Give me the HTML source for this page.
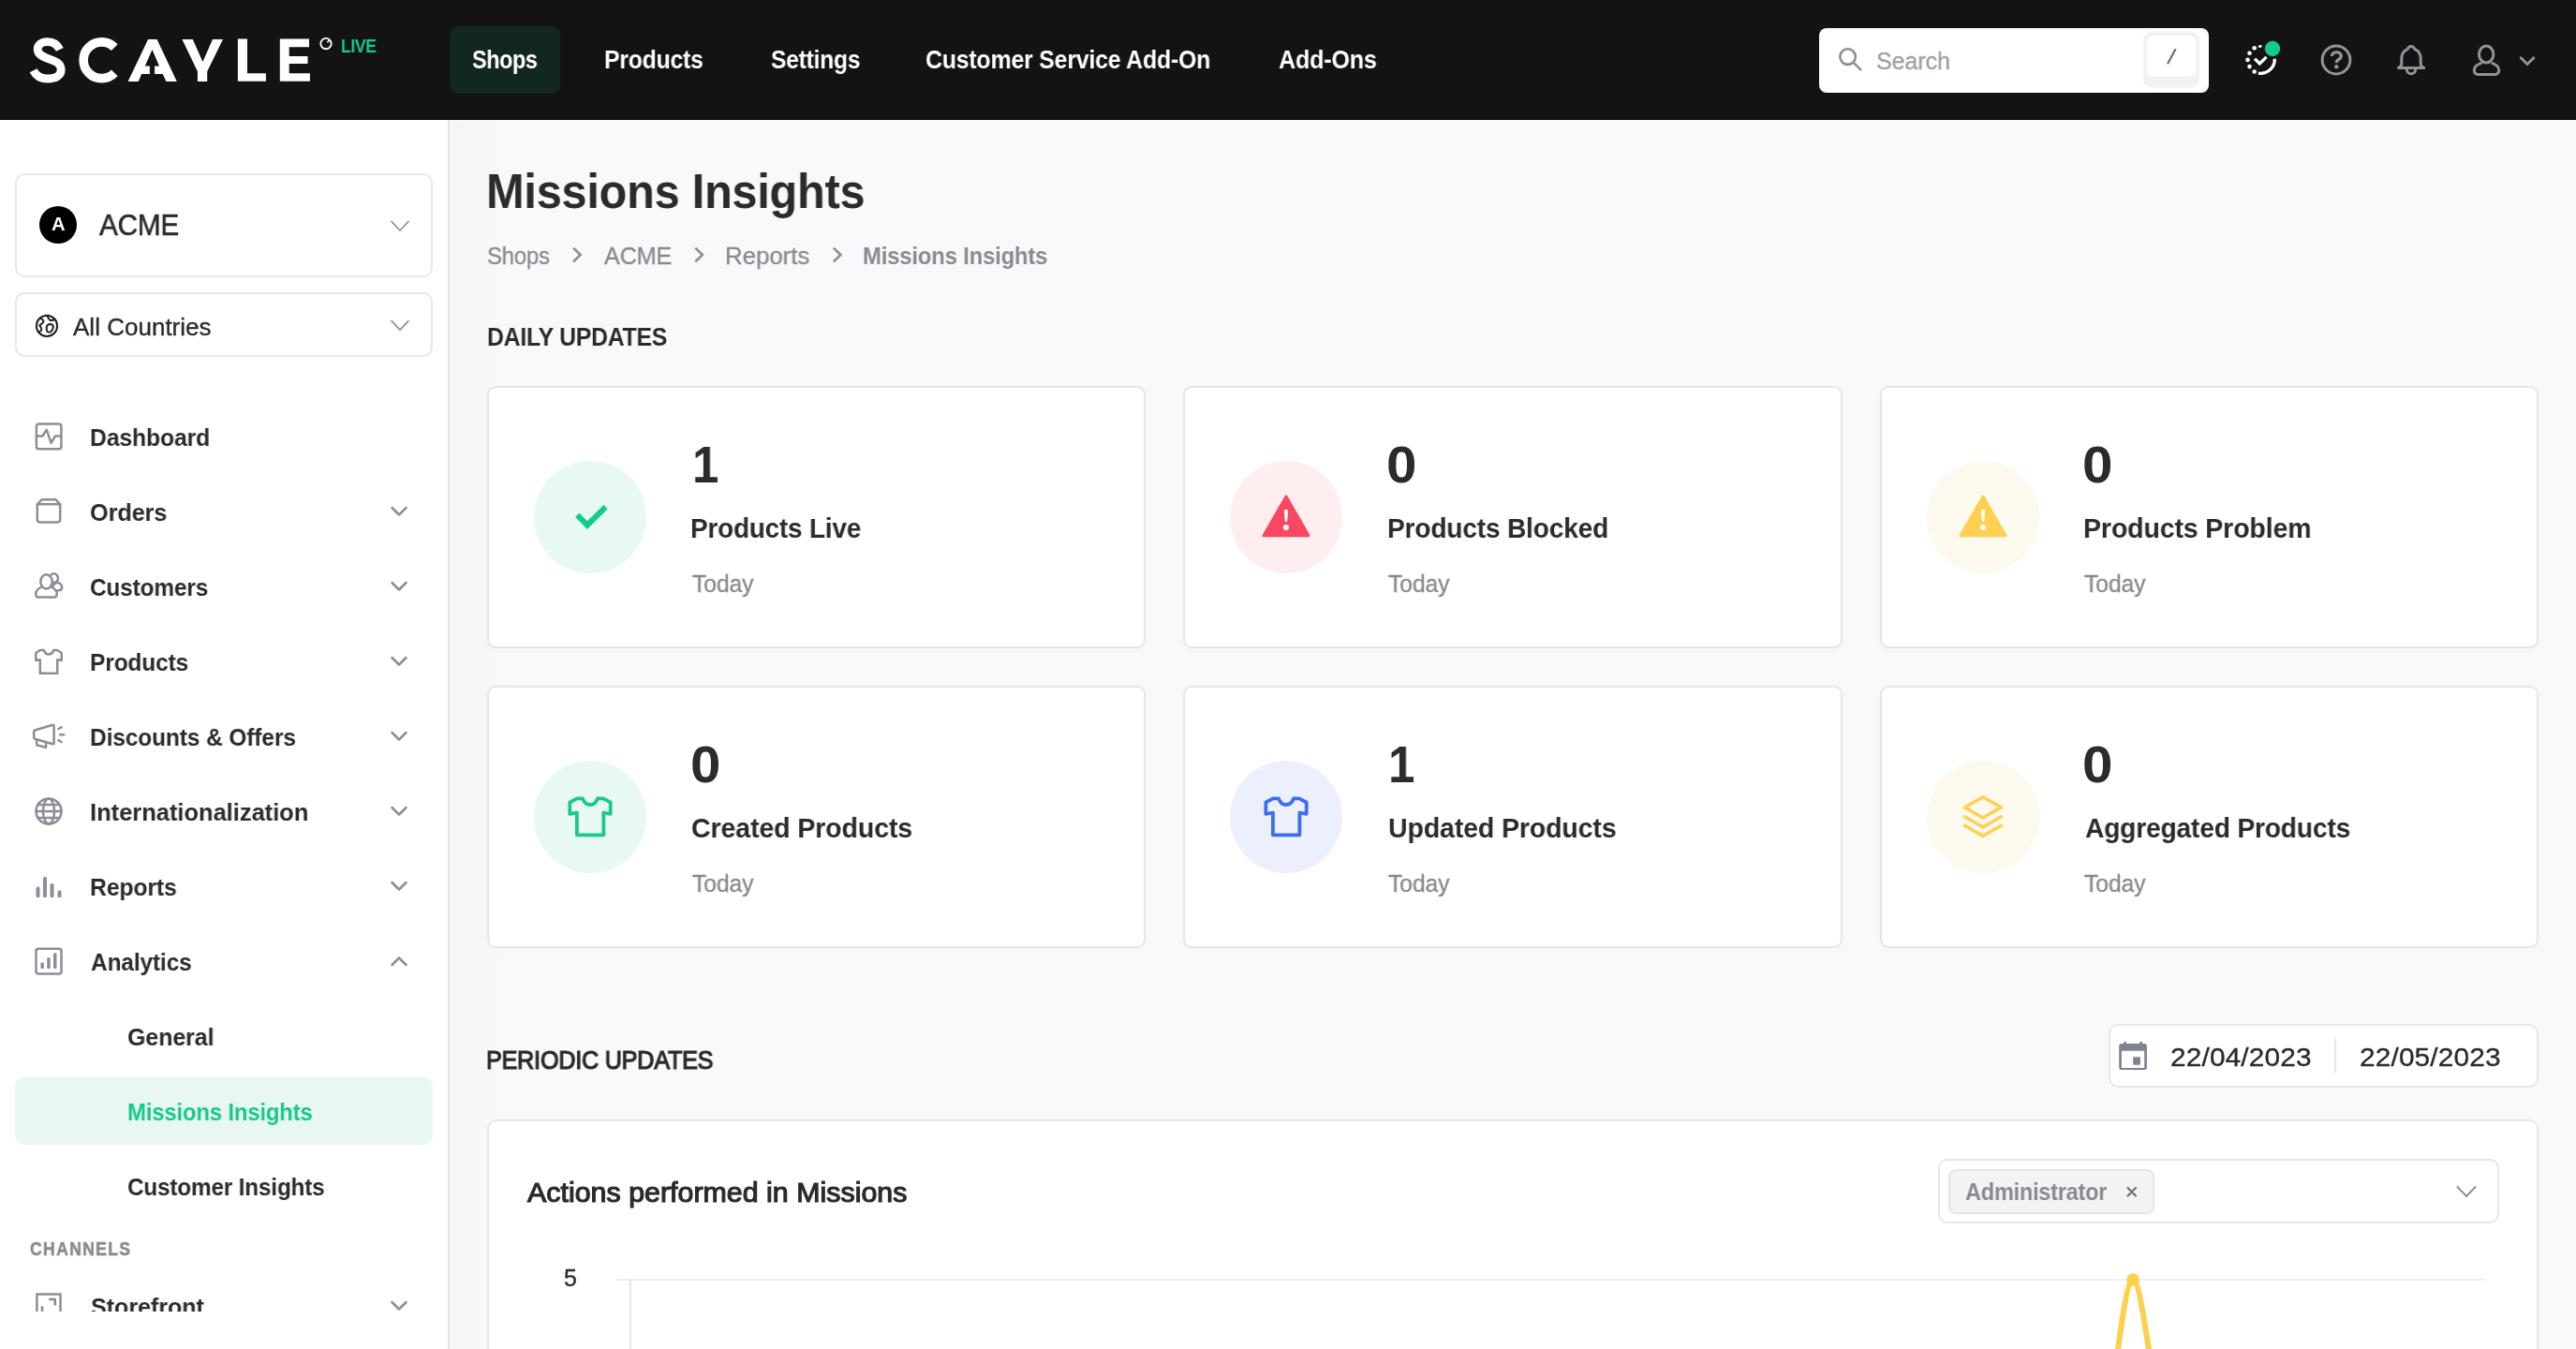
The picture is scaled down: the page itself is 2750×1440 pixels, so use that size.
<!DOCTYPE html>
<html>
<head>
<meta charset="utf-8">
<style>
html,body{margin:0;padding:0;width:2750px;height:1440px;overflow:hidden;background:#f8f9fb;font-family:"Liberation Sans",sans-serif;}
.t{position:absolute;line-height:1;white-space:nowrap;font-family:"Liberation Sans",sans-serif;will-change:transform;}
.abs{position:absolute;}
#header{position:absolute;left:0;top:0;width:2750px;height:127px;background:#131313;border-bottom:1px solid #000;}
#sidebar{position:absolute;left:0;top:128px;width:478px;height:1312px;background:#fff;border-right:2px solid #e6e7ea;overflow:hidden;}
#main{position:absolute;left:480px;top:129px;width:2270px;height:1311px;background:#f8f9fb;}
#shade{position:absolute;left:480px;top:129px;width:60px;height:1311px;background:linear-gradient(to right,#f4f5f7,rgba(248,249,251,0));}
.box{position:absolute;box-sizing:border-box;border:2px solid #e5e7eb;border-radius:10px;background:#fff;}
.card{position:absolute;box-sizing:border-box;width:703.33px;height:280px;border:2px solid #e4e6e9;border-radius:9px;background:#fff;box-shadow:0 2px 8px rgba(20,30,50,0.018);}
.ic{position:absolute;width:120px;height:120px;}
.ic svg{display:block;}
svg.i{position:absolute;left:0;top:0;overflow:visible;}
</style>
</head>
<body>
<div id="header"></div>
<div id="sidebar"></div>
<div id="main"></div>
<div id="shade"></div>

<!-- header graphics -->
<svg class="i" width="2750" height="128" viewBox="0 0 2750 128">
  <!-- logo -->
  <g fill="#fff">
    <path d="M136.6,86.9 L158.1,41.9 L167.6,41.9 L188.8,86.9 L177.4,86.9 L173.7,79 L165.1,79 L165.1,70.6 L170,70.6 L162.5,52.9 L154.8,70.6 L159.9,70.6 L159.9,79 L151.1,79 L147.8,86.9 Z"/>
    <path d="M194.4,41.9 L205.8,41.9 L216.4,66 L227,41.9 L238,41.9 L221.2,76.2 L221.2,86.9 L210.9,86.9 L210.9,76.2 Z"/>
    <path d="M253.9,41.6 H264 V78.2 H283.9 V86.8 H253.9 Z"/>
    <path d="M298.8,41.6 H330 V50.3 H308.7 V60 H328.5 V68 H308.7 V78.2 H330.9 V86.8 H298.8 Z"/>
  </g>
  <g fill="none" stroke="#fff">
    <path d="M63.8,52.8 C61,47 56,44.6 50.5,44.6 C44,44.6 40.2,48.2 40.2,52.6 C40.2,58.2 45.5,60.6 52,62.8 C59.5,65.3 65.2,67.6 65.2,74.6 C65.2,80.6 59.5,84 51,84 C43.5,84 38.2,80.5 35.6,75.2" stroke-width="8.8"/>
    <path d="M122.3,50.6 A19.4,19.4 0 1 0 122.3,77.9" stroke-width="9.6"/>
    <circle cx="348" cy="46.6" r="5.7" stroke-width="1.9"/>
    <path d="M349.3,45.2 L352.2,42.6" stroke-width="1.6"/>
  </g>
  <!-- active nav -->
  <rect x="480" y="28" width="118" height="72" rx="9" fill="#12271f"/>
  <!-- search -->
  <rect x="1942" y="30" width="416" height="69" rx="8" fill="#fff"/>
  <rect x="2288" y="34" width="60" height="59.5" rx="9" fill="#f1f2f4"/>
  <rect x="2292" y="38" width="52" height="43.5" rx="6" fill="#fff"/>
  <path d="M2322.6,52.2 L2314,68.3" stroke="#6e737a" stroke-width="2.3" fill="none"/>
  <g fill="none" stroke="#8a8f97" stroke-width="2.6" stroke-linecap="round">
    <circle cx="1972.6" cy="60.6" r="8.3"/>
    <path d="M1978.8,66.8 L1986.3,74.3"/>
  </g>
  <!-- mission icon -->
  <g fill="#fff">
    <circle cx="2406.7" cy="76.5" r="2.3"/><circle cx="2401.5" cy="71.1" r="2.3"/><circle cx="2399.5" cy="63.9" r="2.3"/>
    <circle cx="2401.5" cy="56.7" r="2.3"/><circle cx="2406.7" cy="51.3" r="2.3"/>
    <path d="M2411.1,48.3 L2414.9,48.2 L2414.1,50.8 L2410.9,50.8 Z"/>
  </g>
  <g fill="none" stroke="#fff" stroke-width="3.3" stroke-linecap="butt" stroke-linejoin="miter">
    <path d="M2428.3,62.8 A14.9,14.9 0 0 1 2410.9,78.1"/>
    <path d="M2407,62.6 L2412.3,68 L2419.5,60.8"/>
  </g>
  <circle cx="2426" cy="51.9" r="8.15" fill="#12cc8d"/>
  <g fill="none" stroke="#909399" stroke-width="3" stroke-linecap="round" stroke-linejoin="round">
    <circle cx="2494" cy="64" r="14.9"/>
  </g>
  <path d="M2489.4,59.9 C2489.4,57.2 2491.6,55.6 2494.3,55.6 C2497.1,55.6 2499.2,57.4 2499.2,59.9 C2499.2,62.4 2496.8,63.2 2495.2,64.6 C2494.5,65.2 2494.4,66 2494.4,67.3" fill="none" stroke="#909399" stroke-width="3.4" stroke-linecap="butt"/>
  <circle cx="2494.2" cy="71.3" r="2.2" fill="#909399"/>
  <g fill="none" stroke="#909399" stroke-width="3" stroke-linecap="round" stroke-linejoin="round">
    <path d="M2574,49.6 C2572,49.6 2570.8,51 2570,52.7 C2566.2,54.3 2563.8,57.8 2563.8,62.2 V68.4 C2563.8,70 2562.3,71.4 2560.4,72.4 H2587.6 C2585.7,71.4 2584.2,70 2584.2,68.4 V62.2 C2584.2,57.8 2581.8,54.3 2578,52.7 C2577.2,51 2576,49.6 2574,49.6 Z"/>
    <path d="M2569.4,74.2 A4.6,4.6 0 0 0 2578.6,74.2"/>
    <ellipse cx="2654.2" cy="58" rx="7.7" ry="8.9"/>
    <path d="M2648.4,67.6 C2644,68.8 2641.3,72 2641.3,75.3 C2641.3,78 2643.5,79.6 2646.5,79.6 H2662.5 C2665.5,79.6 2667.7,78 2667.7,75.3 C2667.7,72 2665,68.8 2660.6,67.6"/>
  </g>
  <path d="M2690.4,61 L2698,68.6 L2705.6,61" fill="none" stroke="#909399" stroke-width="2.8" stroke-linecap="butt" stroke-linejoin="miter"/>
</svg>
<div class="t" style="left:504.0px;top:51.1px;font-size:27px;font-weight:bold;color:#ffffff;letter-spacing:-0.50px;transform:scaleX(0.8682);transform-origin:0 0;">Shops</div><div class="t" style="left:645.1px;top:51.1px;font-size:27px;font-weight:bold;color:#ffffff;letter-spacing:-0.25px;transform:scaleX(0.9181);transform-origin:0 0;">Products</div><div class="t" style="left:822.5px;top:51.1px;font-size:27px;font-weight:bold;color:#ffffff;letter-spacing:-0.24px;transform:scaleX(0.9115);transform-origin:0 0;">Settings</div><div class="t" style="left:988.1px;top:51.1px;font-size:27px;font-weight:bold;color:#ffffff;letter-spacing:-0.22px;transform:scaleX(0.9215);transform-origin:0 0;">Customer Service Add-On</div><div class="t" style="left:1365.0px;top:51.1px;font-size:27px;font-weight:bold;color:#ffffff;letter-spacing:-0.23px;transform:scaleX(0.9321);transform-origin:0 0;">Add-Ons</div><div class="t" style="left:2003.0px;top:52.0px;font-size:26px;font-weight:normal;color:#9a9fa6;letter-spacing:-0.10px;transform:scaleX(0.9635);transform-origin:0 0;-webkit-text-stroke:0.35px #9a9fa6;">Search</div><div class="t" style="left:364.0px;top:38.5px;font-size:20.8px;font-weight:bold;color:#17c98b;letter-spacing:-0.44px;transform:scaleX(0.8469);transform-origin:0 0;">LIVE</div>

<!-- sidebar graphics -->
<div class="box" style="left:16px;top:184.5px;width:446px;height:111.5px;"></div>
<div class="box" style="left:16px;top:312px;width:446px;height:69px;"></div>
<div class="abs" style="left:16px;top:1150px;width:446px;height:72px;border-radius:10px;background:#e8f8f1;"></div>
<svg class="i" width="480" height="1440" viewBox="0 0 480 1440">
  <circle cx="62" cy="240" r="20" fill="#000"/>
  <g fill="none" stroke="#8e9196" stroke-width="1.8" stroke-linecap="round" stroke-linejoin="round">
    <path d="M418,236.5 L427,246 L436,236.5"/>
    <path d="M418,342.7 L427,352.2 L436,342.7"/>
  </g>
  <g fill="none" stroke="#1d1e20" stroke-width="2" stroke-linecap="round" stroke-linejoin="round">
    <circle cx="50" cy="347.9" r="11.1"/>
    <path d="M43,339.6 C45,340.5 46.4,341.5 46.4,343.2 C46.4,345 44,345.8 42.2,347.2 C43.3,348.8 44.6,350 44.3,352 C44,353.4 42.8,354 41.7,354.4"/>
    <path d="M50.5,337 C51,339 51.8,340.5 53.4,341.7 C55,342.3 56.6,341.7 58.4,341"/>
    <path d="M49.7,348.8 C50.5,346.8 52,346 53.6,346 C55.2,346 56.4,346.8 57,348.6 C56.6,350.8 55.8,352.6 54.6,353.8 C53.6,354.6 51.5,354.8 50.5,354 C49.5,352.5 49.6,350.5 49.7,348.8 Z"/>
  </g>
  <g fill="none" stroke="#8a8f97" stroke-width="2.5" stroke-linecap="round" stroke-linejoin="round">
    <!-- dashboard -->
    <rect x="38.9" y="452.6" width="26.5" height="26.7" rx="2.6"/>
    <path d="M38.9,465.5 H45.4 L49.8,458.8 L54.6,472.8 L58.9,465.5 H65.4"/>
    <!-- orders -->
    <path d="M39.8,538.3 L44.8,533.2 H59.2 L64.2,538.3 Z"/>
    <path d="M39.8,538.3 V554.6 Q39.8,557.4 42.6,557.4 H61.4 Q64.2,557.4 64.2,554.6 V538.3"/>
    <!-- customers -->
    <ellipse cx="49.5" cy="620.9" rx="6.2" ry="7.6"/>
    <path d="M54.6,613.6 C55.3,612.6 56.3,612.2 57.4,612.2 C60,612.2 61.9,614.5 61.9,617.3 C61.9,619.8 60.4,621.7 57.8,621.8 H56.4"/>
    <path d="M56.2,626.8 C57.2,624 58.6,622.3 60.8,622.1 C63.8,621.9 66.1,624.3 66.1,627 C66.1,629 64.4,630.3 62.3,630.3 H59.3"/>
    <path d="M43.5,627 C40.2,628.8 38.1,631.4 38.1,634 C38.1,636.3 39.6,637.6 42,637.6 H56.8 C59.3,637.6 60.8,636.3 60.8,634 C60.8,631.4 58.8,628.8 55.5,627"/>
    <!-- products tshirt -->
    <path d="M38.3,697 L43,694 H46.8 C47.8,697 49.8,698.5 52,698.5 C54.2,698.5 56.2,697 57.2,694 H61 L65.7,697 V705 L61.2,704.2 V718.7 H42.8 V704.2 L38.3,705 Z"/>
    <!-- megaphone -->
    <path d="M36.2,781 C36.2,780.3 36.6,779.8 37.3,779.5 L56.4,773.8 C57.1,773.6 57.6,774 57.6,774.7 V793.3 C57.6,794 57.1,794.4 56.4,794.2 L37.3,788.7 C36.6,788.5 36.2,788 36.2,787.3 Z"/>
    <path d="M39.2,789.3 V795.2 L49,797.9 V792.3"/>
    <path d="M62.3,778 L65.6,776.4 M64.1,784.3 H68.2 M62.3,790.2 L65.6,792"/>
    <!-- globe -->
    <circle cx="52" cy="866" r="13.5"/>
    <ellipse cx="52" cy="866" rx="6" ry="13.5"/>
    <path d="M38.5,866 H65.5 M40.5,859 H63.5 M40.5,873 H63.5"/>
    <!-- analytics -->
    <rect x="38.5" y="1012.7" width="27" height="26.8" rx="2.5"/>
  </g>
  <g fill="#8a8f97">
    <rect x="38.5" y="946.5" width="4" height="11.5" rx="1.5"/>
    <rect x="46" y="936" width="4" height="22" rx="1.5"/>
    <rect x="53.5" y="943" width="4" height="15" rx="1.5"/>
    <rect x="61.5" y="950.5" width="4" height="7.5" rx="1.5"/>
    <rect x="43.4" y="1027.4" width="3.5" height="6.5" rx="1"/>
    <rect x="50.2" y="1022.3" width="3.5" height="11.6" rx="1"/>
    <rect x="57" y="1017.3" width="3.5" height="16.6" rx="1"/>
  </g>
  <g fill="none" stroke="#8a8f97" stroke-width="2.5" stroke-linecap="round" stroke-linejoin="round">
    <path d="M418.5,542 L426,549.5 L433.5,542"/>
    <path d="M418.5,622 L426,629.5 L433.5,622"/>
    <path d="M418.5,702 L426,709.5 L433.5,702"/>
    <path d="M418.5,782 L426,789.5 L433.5,782"/>
    <path d="M418.5,862 L426,869.5 L433.5,862"/>
    <path d="M418.5,942 L426,949.5 L433.5,942"/>
    <path d="M418.5,1030 L426,1022.5 L433.5,1030"/>
    <path d="M418.5,1390 L426,1397.5 L433.5,1390"/>
  </g>
  <g fill="none" stroke="#8a8f97" stroke-width="2.5">
    <path d="M39.4,1400 V1381.4 H64.5 V1400"/>
    <path d="M52.2,1387 H58.8 V1393.6 M45,1394.3 V1400"/>
  </g>
</svg>
<div class="t" style="left:55px;top:228.8px;font-size:20.3px;font-weight:bold;color:#fff;">A</div>
<div class="t" style="left:106.0px;top:225.4px;font-size:31.2px;font-weight:normal;color:#2b2b2b;letter-spacing:-0.25px;transform:scaleX(0.9541);transform-origin:0 0;-webkit-text-stroke:0.6px #2b2b2b;">ACME</div><div class="t" style="left:78.4px;top:336.0px;font-size:26px;font-weight:normal;color:#2b2b2b;letter-spacing:0.00px;transform:scaleX(1.0012);transform-origin:0 0;-webkit-text-stroke:0.35px #2b2b2b;">All Countries</div><div class="t" style="left:95.5px;top:454.0px;font-size:26px;font-weight:bold;color:#2b2b2b;letter-spacing:-0.14px;transform:scaleX(0.9521);transform-origin:0 0;">Dashboard</div><div class="t" style="left:95.5px;top:534.0px;font-size:26px;font-weight:bold;color:#2b2b2b;letter-spacing:-0.09px;transform:scaleX(0.9715);transform-origin:0 0;">Orders</div><div class="t" style="left:95.6px;top:614.0px;font-size:26px;font-weight:bold;color:#2b2b2b;letter-spacing:-0.18px;transform:scaleX(0.9392);transform-origin:0 0;">Customers</div><div class="t" style="left:95.6px;top:693.5px;font-size:26px;font-weight:bold;color:#2b2b2b;letter-spacing:-0.16px;transform:scaleX(0.9437);transform-origin:0 0;">Products</div><div class="t" style="left:95.6px;top:774.0px;font-size:26px;font-weight:bold;color:#2b2b2b;letter-spacing:-0.14px;transform:scaleX(0.9433);transform-origin:0 0;">Discounts &amp; Offers</div><div class="t" style="left:95.5px;top:854.0px;font-size:26px;font-weight:bold;color:#2b2b2b;letter-spacing:-0.04px;transform:scaleX(0.9821);transform-origin:0 0;">Internationalization</div><div class="t" style="left:95.5px;top:934.0px;font-size:26px;font-weight:bold;color:#2b2b2b;letter-spacing:-0.14px;transform:scaleX(0.9517);transform-origin:0 0;">Reports</div><div class="t" style="left:96.5px;top:1014.0px;font-size:26px;font-weight:bold;color:#2b2b2b;letter-spacing:-0.15px;transform:scaleX(0.9410);transform-origin:0 0;">Analytics</div><div class="t" style="left:135.6px;top:1094.3px;font-size:26px;font-weight:bold;color:#2b2b2b;letter-spacing:-0.11px;transform:scaleX(0.9621);transform-origin:0 0;">General</div><div class="t" style="left:135.7px;top:1174.0px;font-size:26px;font-weight:bold;color:#17c98b;letter-spacing:-0.20px;transform:scaleX(0.9199);transform-origin:0 0;">Missions Insights</div><div class="t" style="left:135.7px;top:1254.3px;font-size:26px;font-weight:bold;color:#2b2b2b;letter-spacing:-0.17px;transform:scaleX(0.9344);transform-origin:0 0;">Customer Insights</div><div class="t" style="left:32.4px;top:1322.9px;font-size:20.5px;font-weight:bold;color:#878b91;letter-spacing:1.52px;transform:scaleX(0.8600);transform-origin:0 0;-webkit-text-stroke:0.5px #878b91;">CHANNELS</div><div class="t" style="left:96.6px;top:1382.0px;font-size:26px;font-weight:bold;color:#2b2b2b;letter-spacing:-0.08px;transform:scaleX(0.9668);transform-origin:0 0;">Storefront</div>
<div class="abs" style="left:0;top:1400px;width:478px;height:40px;background:#fff;"></div>

<!-- main -->
<div class="card" style="left:520px;top:412px"></div><div class="ic ic-live" style="left:570px;top:492px"><svg width='120' height='120' viewBox='0 0 120 120'><circle cx='60' cy='60' r='60' fill='#e7f9f2'/><polygon points='44,59.8 48.5,55.8 56.9,64.3 74.5,46.9 78.5,51.4 56.9,72.9' fill='#12cc8d'/></svg></div><div class="t" style="left:738.5px;top:468.8px;font-size:55px;font-weight:bold;color:#2b2b2b;letter-spacing:0.00px;transform:scaleX(0.9259);transform-origin:0 0;">1</div><div class="t" style="left:737.3px;top:548.9px;font-size:30px;font-weight:bold;color:#2b2b2b;letter-spacing:-0.21px;transform:scaleX(0.9305);transform-origin:0 0;">Products Live</div><div class="t" style="left:738.5px;top:610.0px;font-size:26px;font-weight:normal;color:#878b91;letter-spacing:-0.15px;transform:scaleX(0.9523);transform-origin:0 0;-webkit-text-stroke:0.35px #878b91;">Today</div><div class="card" style="left:1263.33px;top:412px"></div><div class="ic ic-blocked" style="left:1313.33px;top:492px"><svg width='120' height='120' viewBox='0 0 120 120'><circle cx='60' cy='60' r='60' fill='#feeef0'/><path d='M60,38 L84,79.8 L36,79.8 Z' fill='#f9485f' stroke='#f9485f' stroke-width='3' stroke-linejoin='round'/><path d='M57.9,53 Q60,50.5 62.1,53 L61.2,64.5 Q60,66 58.8,64.5 Z' fill='#fff'/><circle cx='60' cy='70.9' r='3' fill='#fff'/></svg></div><div class="t" style="left:1479.9px;top:469.0px;font-size:55px;font-weight:bold;color:#2b2b2b;letter-spacing:0.00px;transform:scaleX(1.0593);transform-origin:0 0;">0</div><div class="t" style="left:1480.7px;top:548.9px;font-size:30px;font-weight:bold;color:#2b2b2b;letter-spacing:-0.19px;transform:scaleX(0.9364);transform-origin:0 0;">Products Blocked</div><div class="t" style="left:1481.8px;top:610.0px;font-size:26px;font-weight:normal;color:#878b91;letter-spacing:-0.15px;transform:scaleX(0.9523);transform-origin:0 0;-webkit-text-stroke:0.35px #878b91;">Today</div><div class="card" style="left:2006.67px;top:412px"></div><div class="ic ic-problem" style="left:2056.67px;top:492px"><svg width='120' height='120' viewBox='0 0 120 120'><circle cx='60' cy='60' r='60' fill='#fef9ee'/><path d='M60,38 L84,79.8 L36,79.8 Z' fill='#fdd052' stroke='#fdd052' stroke-width='3' stroke-linejoin='round'/><path d='M57.9,53 Q60,50.5 62.1,53 L61.2,64.5 Q60,66 58.8,64.5 Z' fill='#fff'/><circle cx='60' cy='70.9' r='3' fill='#fff'/></svg></div><div class="t" style="left:2223.3px;top:469.0px;font-size:55px;font-weight:bold;color:#2b2b2b;letter-spacing:0.00px;transform:scaleX(1.0593);transform-origin:0 0;">0</div><div class="t" style="left:2224.0px;top:548.9px;font-size:30px;font-weight:bold;color:#2b2b2b;letter-spacing:-0.15px;transform:scaleX(0.9507);transform-origin:0 0;">Products Problem</div><div class="t" style="left:2225.2px;top:610.0px;font-size:26px;font-weight:normal;color:#878b91;letter-spacing:-0.15px;transform:scaleX(0.9523);transform-origin:0 0;-webkit-text-stroke:0.35px #878b91;">Today</div><div class="card" style="left:520px;top:732px"></div><div class="ic ic-created" style="left:570px;top:812px"><svg width='120' height='120' viewBox='0 0 120 120'><circle cx='60' cy='60' r='60' fill='#e7f9f2'/><path d='M38.3,44.5 L46,40.4 H52 C53.5,45 56.5,47 60,47 C63.5,47 66.5,45 68,40.4 H74 L81.7,44.5 V56.8 L74.4,55.5 V79.3 H45.9 V55.5 L38.3,56.8 Z' fill='none' stroke='#17c98b' stroke-width='3.8' stroke-linejoin='round'/></svg></div><div class="t" style="left:736.6px;top:789.0px;font-size:55px;font-weight:bold;color:#2b2b2b;letter-spacing:0.00px;transform:scaleX(1.0593);transform-origin:0 0;">0</div><div class="t" style="left:738.2px;top:868.9px;font-size:30px;font-weight:bold;color:#2b2b2b;letter-spacing:-0.14px;transform:scaleX(0.9523);transform-origin:0 0;">Created Products</div><div class="t" style="left:738.5px;top:930.0px;font-size:26px;font-weight:normal;color:#878b91;letter-spacing:-0.15px;transform:scaleX(0.9523);transform-origin:0 0;-webkit-text-stroke:0.35px #878b91;">Today</div><div class="card" style="left:1263.33px;top:732px"></div><div class="ic ic-updated" style="left:1313.33px;top:812px"><svg width='120' height='120' viewBox='0 0 120 120'><circle cx='60' cy='60' r='60' fill='#ecf0fe'/><path d='M38.3,44.5 L46,40.4 H52 C53.5,45 56.5,47 60,47 C63.5,47 66.5,45 68,40.4 H74 L81.7,44.5 V56.8 L74.4,55.5 V79.3 H45.9 V55.5 L38.3,56.8 Z' fill='none' stroke='#3b6ef5' stroke-width='3.8' stroke-linejoin='round'/></svg></div><div class="t" style="left:1481.9px;top:788.8px;font-size:55px;font-weight:bold;color:#2b2b2b;letter-spacing:0.00px;transform:scaleX(0.9259);transform-origin:0 0;">1</div><div class="t" style="left:1481.6px;top:868.9px;font-size:30px;font-weight:bold;color:#2b2b2b;letter-spacing:-0.15px;transform:scaleX(0.9512);transform-origin:0 0;">Updated Products</div><div class="t" style="left:1481.8px;top:930.0px;font-size:26px;font-weight:normal;color:#878b91;letter-spacing:-0.15px;transform:scaleX(0.9523);transform-origin:0 0;-webkit-text-stroke:0.35px #878b91;">Today</div><div class="card" style="left:2006.67px;top:732px"></div><div class="ic ic-aggregated" style="left:2056.67px;top:812px"><svg width='120' height='120' viewBox='0 0 120 120'><circle cx='60' cy='60' r='60' fill='#fef9ee'/><g fill='none' stroke='#fdd052' stroke-width='3.6' stroke-linejoin='round' stroke-linecap='round'><path d='M59.9,38.8 L79.3,49.8 L59.9,61 L40.5,49.8 Z'/><path d='M40.5,59.8 L59.9,71 L79.3,59.8'/><path d='M40.5,69.3 L59.9,80.5 L79.3,69.3'/></g></svg></div><div class="t" style="left:2223.3px;top:789.0px;font-size:55px;font-weight:bold;color:#2b2b2b;letter-spacing:0.00px;transform:scaleX(1.0593);transform-origin:0 0;">0</div><div class="t" style="left:2225.9px;top:868.9px;font-size:30px;font-weight:bold;color:#2b2b2b;letter-spacing:-0.19px;transform:scaleX(0.9389);transform-origin:0 0;">Aggregated Products</div><div class="t" style="left:2225.2px;top:930.0px;font-size:26px;font-weight:normal;color:#878b91;letter-spacing:-0.15px;transform:scaleX(0.9523);transform-origin:0 0;-webkit-text-stroke:0.35px #878b91;">Today</div>
<div class="box" style="left:2251px;top:1092.5px;width:459px;height:68.5px;"></div>
<div class="box" style="left:520px;top:1194.5px;width:2190px;height:300px;"></div>
<div class="box" style="left:2069px;top:1236.5px;width:599px;height:69px;"></div>
<div class="abs" style="left:2080px;top:1248px;width:220px;height:47.5px;box-sizing:border-box;border:2px solid #e3e5e8;border-radius:8px;background:#f2f3f4;"></div>
<svg class="i" width="2750" height="1440" viewBox="0 0 2750 1440">
  <g fill="none" stroke="#8a8f97" stroke-width="2.7" stroke-linecap="butt" stroke-linejoin="miter">
    <path d="M612,264.6 L619.6,272 L612,279.4"/>
    <path d="M742.3,264.6 L749.9,272 L742.3,279.4"/>
    <path d="M889.8,264.6 L897.4,272 L889.8,279.4"/>
  </g>
  <!-- calendar -->
  <g fill="#7d848e">
    <rect x="2267.2" y="1112" width="2.8" height="4"/>
    <rect x="2284.2" y="1112" width="2.8" height="4"/>
    <path d="M2264.7,1114 H2289.4 Q2291.9,1114 2291.9,1116.5 V1139.4 Q2291.9,1141.9 2289.4,1141.9 H2264.7 Q2262.2,1141.9 2262.2,1139.4 V1116.5 Q2262.2,1114 2264.7,1114 Z M2264.9,1121.8 V1139.9 H2289.2 V1121.8 Z" fill-rule="evenodd"/>
    <rect x="2277.2" y="1128.3" width="7.7" height="8.4"/>
  </g>
  <rect x="2492.2" y="1108.5" width="1.8" height="36.5" fill="#e3e5e8"/>
  <g fill="none" stroke="#8a8f97" stroke-width="1.9" stroke-linecap="round" stroke-linejoin="round">
    <path d="M2623.5,1267 L2633,1277 L2642.5,1267"/>
  </g>
  <g fill="none" stroke="#6c7078" stroke-width="2.2" stroke-linecap="round">
    <path d="M2271.5,1268 L2280,1276.5 M2280,1268 L2271.5,1276.5"/>
  </g>
  <!-- chart -->
  <rect x="657" y="1365" width="1997" height="2" fill="#eeeff1"/>
  <rect x="672" y="1366" width="2" height="80" fill="#e6e7ea"/>
  <path d="M2245,1560 C2258,1470 2268,1366 2277,1366 C2286,1366 2297,1470 2312,1560" fill="none" stroke="#fcd04b" stroke-width="6"/>
  <circle cx="2277" cy="1366" r="6.8" fill="#fcd04b"/>
</svg>
<div class="t" style="left:518.6px;top:178.4px;font-size:52px;font-weight:bold;color:#2b2b2b;letter-spacing:-0.30px;transform:scaleX(0.9378);transform-origin:0 0;">Missions Insights</div><div class="t" style="left:520.1px;top:260.0px;font-size:26px;font-weight:normal;color:#878b91;letter-spacing:-0.26px;transform:scaleX(0.9209);transform-origin:0 0;-webkit-text-stroke:0.35px #878b91;">Shops</div><div class="t" style="left:645.0px;top:260.0px;font-size:26px;font-weight:normal;color:#878b91;letter-spacing:-0.14px;transform:scaleX(0.9684);transform-origin:0 0;-webkit-text-stroke:0.35px #878b91;">ACME</div><div class="t" style="left:773.7px;top:260.0px;font-size:26px;font-weight:normal;color:#878b91;letter-spacing:-0.02px;transform:scaleX(0.9929);transform-origin:0 0;-webkit-text-stroke:0.35px #878b91;">Reports</div><div class="t" style="left:921.1px;top:260.0px;font-size:26px;font-weight:bold;color:#878b91;letter-spacing:-0.20px;transform:scaleX(0.9183);transform-origin:0 0;">Missions Insights</div><div class="t" style="left:520.1px;top:346.8px;font-size:27px;font-weight:bold;color:#2b2b2b;letter-spacing:-0.26px;transform:scaleX(0.9179);transform-origin:0 0;">DAILY UPDATES</div><div class="t" style="left:519.3px;top:1119.1px;font-size:27px;font-weight:normal;color:#2b2b2b;letter-spacing:-0.22px;transform:scaleX(0.9316);transform-origin:0 0;-webkit-text-stroke:1.2px #2b2b2b;">PERIODIC UPDATES</div><div class="t" style="left:2316.7px;top:1114.3px;font-size:28.5px;font-weight:normal;color:#2b2b2b;letter-spacing:0.13px;transform:scaleX(1.0470);transform-origin:0 0;-webkit-text-stroke:0.35px #2b2b2b;">22/04/2023</div><div class="t" style="left:2518.6px;top:1114.3px;font-size:28.5px;font-weight:normal;color:#2b2b2b;letter-spacing:0.13px;transform:scaleX(1.0470);transform-origin:0 0;-webkit-text-stroke:0.35px #2b2b2b;">22/05/2023</div><div class="t" style="left:562.5px;top:1258.4px;font-size:30px;font-weight:normal;color:#2b2b2b;letter-spacing:0.03px;transform:scaleX(1.0110);transform-origin:0 0;-webkit-text-stroke:1.2px #2b2b2b;">Actions performed in Missions</div><div class="t" style="left:2098.4px;top:1258.5px;font-size:26px;font-weight:bold;color:#878b91;letter-spacing:-0.25px;transform:scaleX(0.9041);transform-origin:0 0;">Administrator</div><div class="t" style="left:602.0px;top:1352.3px;font-size:25px;font-weight:normal;color:#2b2b2b;letter-spacing:0.00px;-webkit-text-stroke:0.35px #2b2b2b;">5</div>
</body>
</html>
